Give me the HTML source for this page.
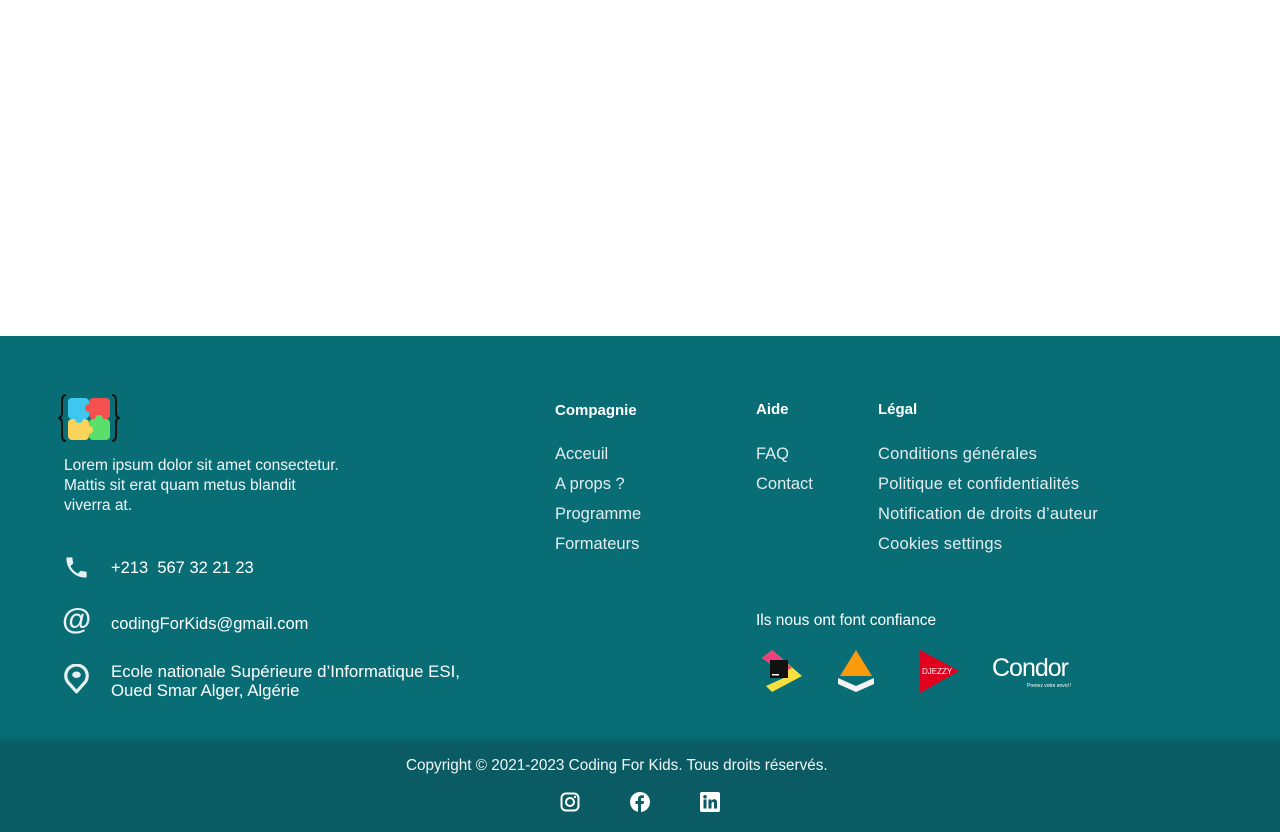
<!DOCTYPE html>
<html><head><meta charset="utf-8">
<style>
*{margin:0;padding:0;box-sizing:border-box}
body{width:1280px;height:832px;background:#fff;position:relative;overflow:hidden;font-family:"Liberation Sans",sans-serif;color:#eef4f5}
.ft{position:absolute;left:0;top:336px;width:1280px;height:496px;background:#086d75}
.bb{position:absolute;left:0;top:743px;width:1280px;height:89px;background:#0a5b63;box-shadow:0 -3px 6px rgba(0,0,0,.15)}
.a{position:absolute;white-space:nowrap}
.h{font-weight:bold;font-size:15px;color:#fff}
.l{font-size:16.5px;color:#e3ecee}
.c{font-size:16.5px;color:#fff}
.lo{font-size:15.5px;line-height:20px;color:#f2f6f7}
</style></head><body>
<div class="ft"></div>
<div class="bb"></div>

<svg class="a" style="left:58px;top:393px" width="62" height="50" viewBox="0 0 62 50">
<path d="M8 2 Q4 2 4 8 L4 20 Q4 24 1 25 Q4 26 4 30 L4 42 Q4 48 8 48" fill="none" stroke="#111" stroke-width="2"/>
<path d="M54 2 Q58 2 58 8 L58 20 Q58 24 61 25 Q58 26 58 30 L58 42 Q58 48 54 48" fill="none" stroke="#111" stroke-width="2"/>
<rect x="10" y="5" width="21" height="21" rx="4" fill="#3fc7ef"/>
<rect x="31" y="5" width="21" height="21" rx="4" fill="#f4504f"/>
<rect x="10" y="26" width="21" height="21" rx="4" fill="#fbd35a"/>
<rect x="31" y="26" width="21" height="21" rx="4" fill="#5ae06a"/>
<circle cx="31" cy="15" r="4" fill="#f4504f"/><circle cx="41" cy="26" r="4" fill="#5ae06a"/>
<circle cx="21" cy="26" r="4" fill="#3fc7ef"/><circle cx="31" cy="37" r="4" fill="#fbd35a"/>
</svg>
<div class="a lo" style="left:64px;top:456px">Lorem ipsum dolor sit amet consectetur.<br>Mattis sit erat quam metus blandit<br>viverra at.</div>

<svg class="a" style="left:63px;top:554px" width="27" height="27" viewBox="0 0 24 24"><path fill="#e6f0f1" d="M6.6 10.8c1.4 2.8 3.8 5.1 6.6 6.6l2.2-2.2c.3-.3.7-.4 1-.2 1.1.4 2.3.6 3.6.6.6 0 1 .4 1 1V20c0 .6-.4 1-1 1C10.6 21 3 13.4 3 4c0-.6.4-1 1-1h3.5c.6 0 1 .4 1 1 0 1.3.2 2.5.6 3.6.1.3 0 .7-.2 1z"/></svg>
<div class="a c" style="left:111px;top:559px">+213&nbsp; 567 32 21 23</div>
<div class="a" style="left:62px;top:603px;font-size:30px;font-weight:bold;color:#e6f0f1;line-height:34px">@</div>
<div class="a c" style="left:111px;top:615px">codingForKids@gmail.com</div>
<svg class="a" style="left:63px;top:664px" width="27" height="30" viewBox="0 0 24 28"><path d="M12 26 L4 17 A10 10 0 1 1 20 17 Z" fill="none" stroke="#e6f0f1" stroke-width="3" stroke-linejoin="round"/><ellipse cx="12" cy="10" rx="4" ry="3" fill="#e6f0f1"/></svg>
<div class="a c" style="left:111px;top:662px;line-height:19px;font-size:16.8px">Ecole nationale Supérieure d’Informatique ESI,<br>Oued Smar Alger, Algérie</div>

<div class="a h" style="left:555px;top:402px">Compagnie</div>
<div class="a l" style="left:555px;top:439px;line-height:30px">Acceuil<br>A props ?<br>Programme<br>Formateurs</div>
<div class="a h" style="left:756px;top:401px">Aide</div>
<div class="a l" style="left:756px;top:439px;line-height:30px">FAQ<br>Contact</div>
<div class="a h" style="left:878px;top:401px">Légal</div>
<div class="a l" style="left:878px;top:439px;line-height:30px;letter-spacing:0.2px">Conditions générales<br>Politique et confidentialités<br>Notification de droits d’auteur<br>Cookies settings</div>

<div class="a" style="left:756px;top:612px;font-size:15.5px;color:#fff">Ils nous ont font confiance</div>
<svg class="a" style="left:758px;top:648px" width="46" height="46" viewBox="0 0 46 46">
<path d="M4 10 L14 2 L44 28 L14 44 L8 38 L30 28 Z" fill="#f7e040"/>
<path d="M4 10 L14 2 L34 20 L24 24 Z" fill="#f0407a"/>
<rect x="12" y="12" width="18" height="18" fill="#111"/><rect x="14" y="26" width="7" height="1.5" fill="#fff"/>
</svg>
<svg class="a" style="left:836px;top:648px" width="40" height="44" viewBox="0 0 40 44">
<path d="M20 2 L36 28 L4 28 Z" fill="#fb9a0c"/>
<path d="M2 30 L20 38 L38 30 L38 36 L20 44 L2 36 Z" fill="#f4f4f4"/>
</svg>
<svg class="a" style="left:918px;top:648px" width="42" height="46" viewBox="0 0 42 46">
<path d="M2 2 L41 23 L2 45 Z" fill="#e1001d"/>
<text x="4" y="26" font-size="8" font-family="Liberation Sans" fill="#fff">DJEZZY</text>
</svg>
<div class="a" style="left:992px;top:654px;font-size:25px;color:#fff;letter-spacing:-1px">Condor</div>
<div class="a" style="left:1027px;top:683px;font-size:5px;color:#fff">Prenez votre envol !</div>

<div class="a" style="left:406px;top:757px;font-size:15.3px;color:#f2f6f7">Copyright © 2021-2023 Coding For Kids. Tous droits réservés.</div>
<svg class="a" style="left:560px;top:792px" width="20" height="20" viewBox="0 0 20 20"><rect x="1.5" y="1.5" width="17" height="17" rx="4.5" fill="none" stroke="#fff" stroke-width="2"/><circle cx="10" cy="10" r="4" fill="none" stroke="#fff" stroke-width="2"/><circle cx="15" cy="5" r="1.2" fill="#fff"/></svg>
<svg class="a" style="left:630px;top:792px" width="20" height="20" viewBox="0 0 20 20"><circle cx="10" cy="10" r="10" fill="#fff"/><path d="M11 20 V12 H13.5 L14 9 H11 V7.3 C11 6.5 11.3 6 12.4 6 H14 V3.4 C13.5 3.3 12.6 3.2 11.8 3.2 C9.5 3.2 8 4.6 8 7 V9 H5.5 V12 H8 V20 Z" fill="#0a5b63"/></svg>
<svg class="a" style="left:700px;top:792px" width="20" height="20" viewBox="0 0 20 20"><rect width="20" height="20" rx="2" fill="#fff"/><rect x="3.5" y="7.5" width="3" height="9" fill="#0a5b63"/><circle cx="5" cy="4.8" r="1.8" fill="#0a5b63"/><path d="M8.5 7.5 H11.3 V9 C11.8 8 13 7.3 14.3 7.3 C16.5 7.3 17 8.8 17 11 V16.5 H14 V11.6 C14 10.6 13.8 9.9 12.9 9.9 C11.9 9.9 11.5 10.6 11.5 11.6 V16.5 H8.5 Z" fill="#0a5b63"/></svg>
</body></html>
